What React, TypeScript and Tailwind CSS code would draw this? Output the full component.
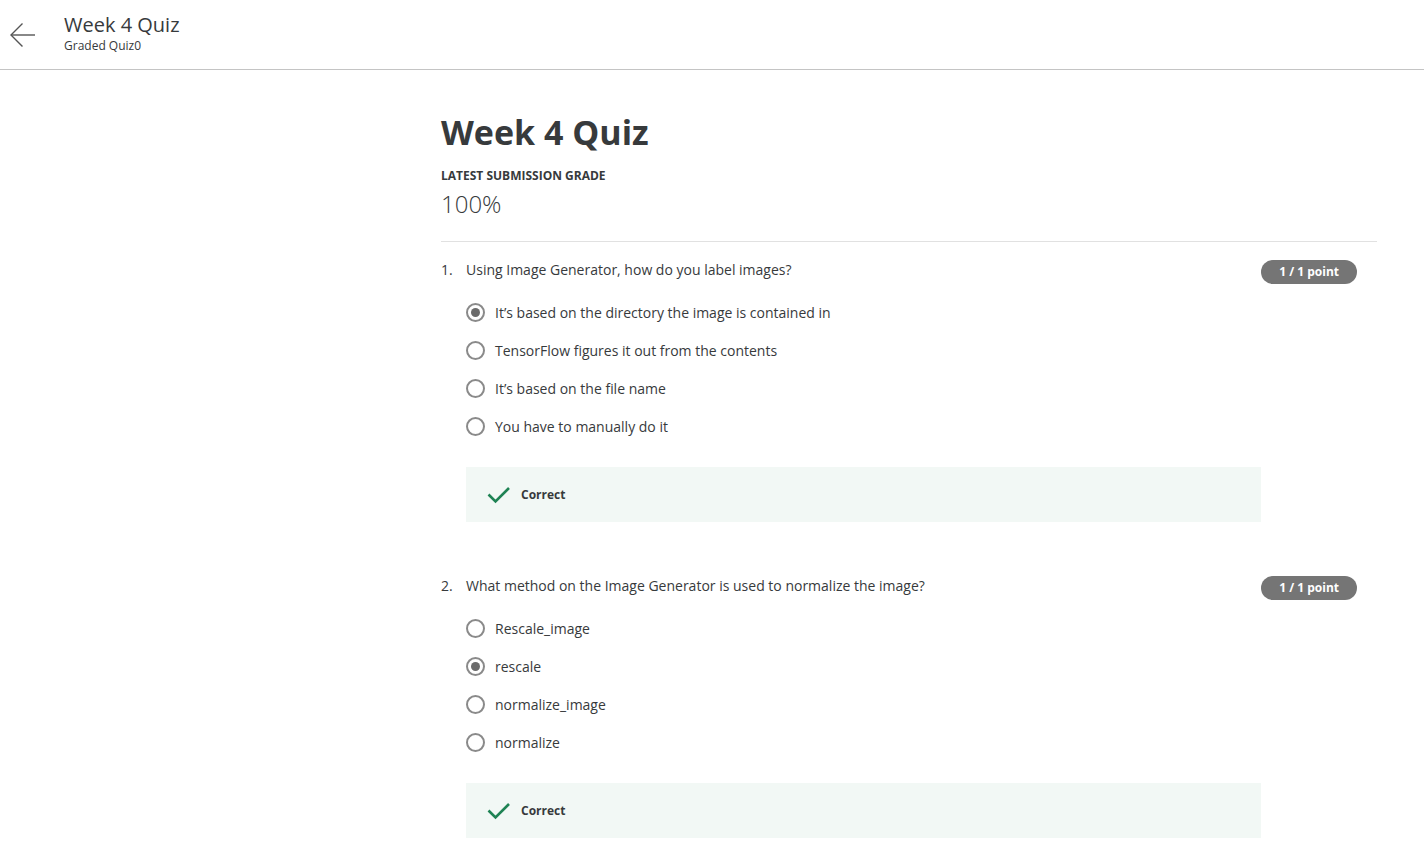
type Question = {
  number: number;
  text: string;
  options: string[];
  selected: number;
};

const questions: Question[] = [
  {
    number: 1,
    text: 'Using Image Generator, how do you label images?',
    options: [
      'It’s based on the directory the image is contained in',
      'TensorFlow figures it out from the contents',
      'It’s based on the file name',
      'You have to manually do it',
    ],
    selected: 0,
  },
  {
    number: 2,
    text: 'What method on the Image Generator is used to normalize the image?',
    options: ['Rescale_image', 'rescale', 'normalize_image', 'normalize'],
    selected: 1,
  },
];

function BackArrow() {
  return (
    <svg width="26" height="26" viewBox="0 0 26 26" fill="none" stroke="#555" strokeWidth="1.4">
      <path d="M1 13 H25" />
      <path d="M12.5 1.5 L1 13 L12.5 24.5" />
    </svg>
  );
}

function CheckMark() {
  return (
    <svg width="24" height="18" viewBox="0 0 24 18" fill="none" stroke="#1f8354" strokeWidth="2.6">
      <path d="M1.5 8.5 L8.5 15.5 L22 2" />
    </svg>
  );
}

function Radio({ checked }: { checked: boolean }) {
  return (
    <span className="flex h-[19px] w-[19px] shrink-0 items-center justify-center rounded-full border-2 border-[#8a8a8a] bg-white">
      {checked && <span className="h-[9px] w-[9px] rounded-full bg-[#6b6b6b]" />}
    </span>
  );
}

function QuestionBlock({ q }: { q: Question }) {
  return (
    <div className="mb-[52px]">
      <div className="flex items-start justify-between pr-[20px]">
        <div className="mt-[2px] flex text-[14px] leading-[20px] text-[#373a3c]">
          <span className="w-[25px]">{q.number}.</span>
          <span>{q.text}</span>
        </div>
        <span className="mt-[2px] rounded-full bg-[#757575] px-[18px] py-[3px] text-[12px] leading-[18px] font-bold text-white">
          1 / 1 point
        </span>
      </div>
      <div className="ml-[25px] mt-[19px] flex flex-col gap-[19px]">
        {q.options.map((opt, i) => (
          <label key={opt} className="flex h-[19px] items-center gap-[10px] text-[14px] text-[#373a3c]">
            <Radio checked={i === q.selected} />
            <span>{opt}</span>
          </label>
        ))}
      </div>
      <div className="ml-[25px] mr-[116px] mt-[31px] flex h-[55px] items-center gap-[10px] bg-[#f2f8f5] pl-[21px]">
        <CheckMark />
        <span className="text-[12px] font-bold text-[#373a3c]">Correct</span>
      </div>
    </div>
  );
}

export default function App() {
  return (
    <div className="min-h-screen bg-white font-['Open_Sans',sans-serif] text-[#373a3c]">
      <header className="flex h-[70px] items-center border-b border-[#c4c4c4]">
        <button className="ml-[10px] flex items-center">
          <BackArrow />
        </button>
        <div className="ml-[28px] -mt-[3px] flex flex-col">
          <span className="text-[20px] leading-[26px] text-[#373a3c]">Week 4 Quiz</span>
          <span className="text-[12px] leading-[16px] text-[#373a3c]">Graded Quiz0</span>
        </div>
      </header>

      <main className="flex">
        <div className="w-[441px] shrink-0" />
        <div className="w-[936px]">
          <h1 className="mt-[36px] text-[34px] font-bold leading-[52px] text-[#373a3c]">Week 4 Quiz</h1>
          <div className="mt-[10px] text-[12px] font-bold leading-[16px]">LATEST SUBMISSION GRADE</div>
          <div className="mt-[4px] text-[24px] font-light leading-[32px]">100%</div>
          <div className="mt-[21px] border-t border-[#e1e1e1]" />
          <div className="mt-[16px]">
            {questions.map((q) => (
              <QuestionBlock key={q.number} q={q} />
            ))}
          </div>
        </div>
      </main>
    </div>
  );
}
